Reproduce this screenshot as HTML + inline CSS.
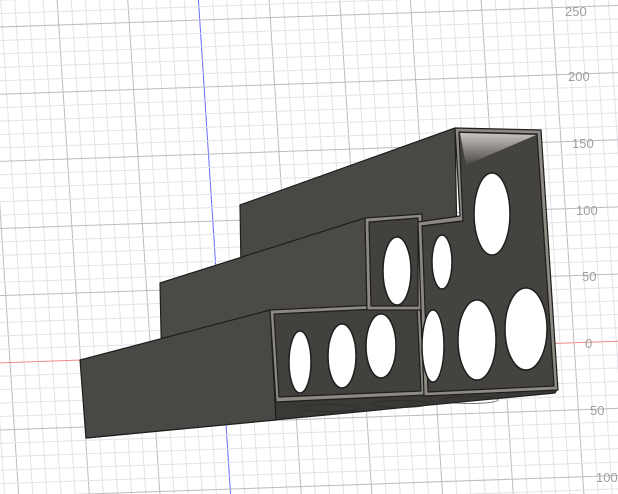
<!DOCTYPE html>
<html><head><style>
html,body{margin:0;padding:0;background:#fff;width:618px;height:494px;overflow:hidden}
svg{display:block}
text{font-family:"Liberation Sans",sans-serif;font-size:13px;fill:#a0a0a0}
</style></head><body>
<svg width="618" height="494" viewBox="0 0 618 494" xmlns="http://www.w3.org/2000/svg">
<defs>
<linearGradient id="ceil" x1="0" y1="0" x2="0" y2="1">
<stop offset="0" stop-color="#c9c6c0"/><stop offset="1" stop-color="#4a4845"/>
</linearGradient>
<clipPath id="c"><rect width="618" height="494"/></clipPath>
</defs>
<rect width="618" height="494" fill="#fff"/>
<g clip-path="url(#c)">
<g transform="matrix(1,-0.035,0.065,1,0,0)" stroke-width="1">
<g id="minor" stroke="#e3e3e8"></g>
</g>
</g>
<script>
(function(){
var g=document.getElementById('minor');var ns='http://www.w3.org/2000/svg';
for(var k=-30;k<=40;k++){var x=198+k*14.1;var l=document.createElementNS(ns,'line');
l.setAttribute('x1',x);l.setAttribute('x2',x);l.setAttribute('y1',-100);l.setAttribute('y2',700);
if(k%5==0){l.setAttribute('stroke',k==0?'#6b6bff':'#bcbcbc');}
g.appendChild(l);}
for(var k=-40;k<=30;k++){var y=362+k*13.4;var l=document.createElementNS(ns,'line');
l.setAttribute('y1',y);l.setAttribute('y2',y);l.setAttribute('x1',-100);l.setAttribute('x2',800);
if(k%5==0){l.setAttribute('stroke',k==0?'#f08a8a':'#bcbcbc');}
g.appendChild(l);}
})();
</script>
<text x="565" y="16">250</text>
<text x="568" y="81">200</text>
<text x="572" y="148">150</text>
<text x="576" y="215">100</text>
<text x="582" y="281">50</text>
<text x="585" y="348">0</text>
<text x="590" y="415">50</text>
<text x="596" y="482">100</text>

<g stroke="#1e1e1e" stroke-width="1.2" stroke-linejoin="round">
<polygon points="276,400 558,388 555,393 86,438" fill="#3b3936"/>
<polygon points="240,205 455,128 458,300 242,330" fill="#4a4845"/>
<polygon points="160,283 365,218 368,360 162,380" fill="#4c4a47"/>
<polygon points="80,360 270,310 276,420 86,438" fill="#4a4845"/>
<polygon points="270,310 420,303 425,395 276,402" fill="#8d8983"/>
<polygon points="274,314 417,307 421,391 279,397" fill="#43413e"/>
<polygon points="365,218 422,214 422,310 367,310" fill="#8d8983"/>
<polygon points="369,222 418,218 418,306 371,306" fill="#43413e"/>
<polygon points="455,128 541,130 558,390 424,396 418,222 460,216" fill="#8d8983"/>
<polygon points="459,132 537,134 554,386 428,392 422,226 463,221" fill="#45433f"/>
<polygon points="460,133 536,135 466,165" fill="url(#ceil)" stroke="none"/>
<polyline points="422,226 463,221" fill="none"/>
</g>
<g fill="#fff" stroke="#1e1e1e" stroke-width="1.5">
<ellipse cx="300" cy="362" rx="11" ry="31"/>
<ellipse cx="342" cy="356" rx="14" ry="32"/>
<ellipse cx="381" cy="346" rx="15" ry="32"/>
<ellipse cx="397" cy="271" rx="14" ry="34"/>
<ellipse cx="492" cy="214" rx="18" ry="41"/>
<ellipse cx="442" cy="262" rx="10" ry="27"/>
<ellipse cx="433" cy="346" rx="11" ry="36"/>
<ellipse cx="477" cy="340" rx="19" ry="40"/>
<ellipse cx="526" cy="329" rx="21" ry="41"/>
</g>
<g fill="none" stroke="#2a2826" stroke-width="1" opacity="0.6">
<ellipse cx="330" cy="408" rx="28" ry="3.5"/>
<ellipse cx="400" cy="404" rx="28" ry="3.5"/>
<ellipse cx="470" cy="400" rx="28" ry="3.5"/>
</g>
</svg>
</body></html>
